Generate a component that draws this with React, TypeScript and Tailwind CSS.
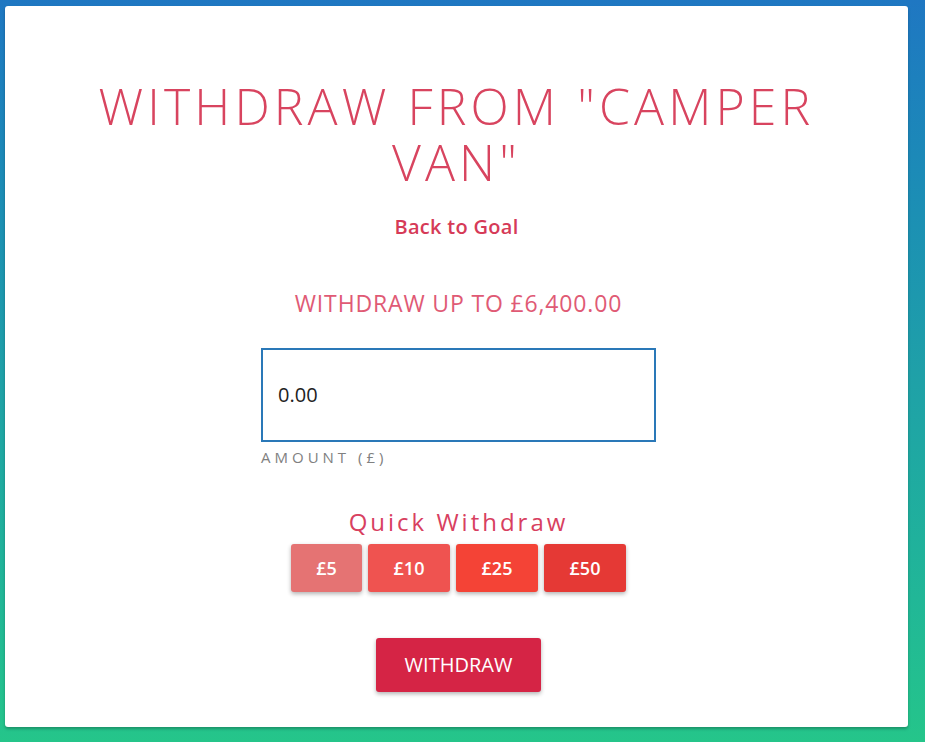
import { useState } from 'react';

const quickAmounts = [
  { label: '£5', cls: 'w-[71px] bg-[#e57373]' },
  { label: '£10', cls: 'w-[82px] bg-[#ef5350]' },
  { label: '£25', cls: 'w-[82px] bg-[#f44336]' },
  { label: '£50', cls: 'w-[82px] bg-[#e53935]' },
];

export default function App() {
  const [amount, setAmount] = useState('0.00');

  return (
    <div className="h-[742px] w-[925px] overflow-hidden bg-gradient-to-b from-[#1f77c2] via-[#1fa0a8] to-[#25c58a] pl-[5px] pr-[17px] pt-[6px] font-['Open_Sans',sans-serif]">
      <div className="flex h-[721px] flex-col items-center rounded-[3px] bg-white pt-[72px] shadow-[0_2px_3px_rgba(0,0,0,0.25)]">
        {/* Heading */}
        <h1 className="w-[790px] text-center text-[50px] font-light leading-[56px] tracking-[4.1px] text-[#d8445f]">
          WITHDRAW FROM "CAMPER VAN"
        </h1>
        <a className="mt-[22px] text-[20px] font-semibold tracking-[0.3px] text-[#d63a57]">
          Back to Goal
        </a>

        <div className="flex flex-col items-center pl-[4px]">
          <div className="mt-[44px] text-[23px] tracking-[0.85px] text-[#e05a75]">
            WITHDRAW UP TO £6,400.00
          </div>

          {/* Amount input */}
          <div className="mt-[27px] flex flex-col">
            <input
              value={amount}
              onChange={(e) => setAmount(e.target.value)}
              className="h-[94px] w-[395px] border-2 border-[#2a78b8] px-[15px] text-[20px] text-[#222] outline-none"
            />
            <label className="mt-[4px] text-[15px] tracking-[4px] text-[#808080]">
              AMOUNT (£)
            </label>
          </div>

          {/* Quick withdraw */}
          <div className="mt-[36px] text-[24px] tracking-[3px] text-[#d84060]">
            Quick Withdraw
          </div>
          <div className="mt-[4px] flex gap-[6px]">
            {quickAmounts.map((q) => (
              <button
                key={q.label}
                className={`${q.cls} h-[48px] rounded-[3px] text-[18px] font-semibold text-white shadow-[0_2px_4px_rgba(0,0,0,0.3)]`}
              >
                {q.label}
              </button>
            ))}
          </div>

          <button className="mt-[46px] h-[54px] w-[165px] rounded-[3px] bg-[#d52445] text-[20px] text-white shadow-[0_2px_4px_rgba(0,0,0,0.3)]">
            WITHDRAW
          </button>
        </div>
      </div>
    </div>
  );
}
